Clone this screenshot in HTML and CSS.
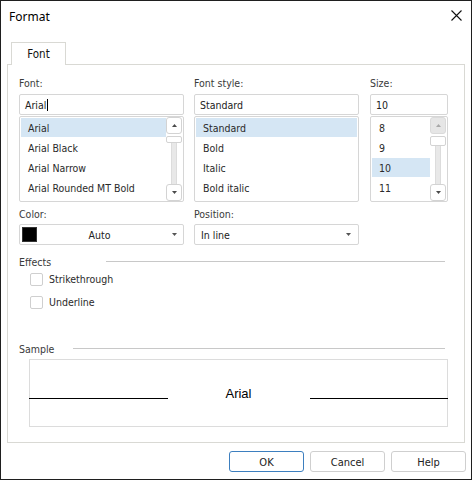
FILE: index.html
```html
<!DOCTYPE html>
<html>
<head>
<meta charset="utf-8">
<link rel="stylesheet" href="styles.css">
</head>
<body>
<div class="window">
  <div class="titlebar">
    <span class="title">Format</span>
    <svg class="close" width="11" height="11" viewBox="0 0 11 11"><path d="M0.5 0.5L10.5 10.5M10.5 0.5L0.5 10.5" stroke="#111" stroke-width="1.1" fill="none"/></svg>
  </div>
  <div class="tabs"><div class="tab">Font</div></div>
  <div class="panel">
    <div class="grid-top">
      <div class="col">
        <div class="label">Font:</div>
        <div class="input">Arial<span class="caret"></span></div>
        <div class="list">
          <div class="items">
            <div class="item sel">Arial</div>
            <div class="item">Arial Black</div>
            <div class="item">Arial Narrow</div>
            <div class="item">Arial Rounded MT Bold</div>
          </div>
          <div class="sbar">
            <div class="sbtn"><svg width="5" height="3" viewBox="0 0 5 3"><polygon points="2.5,0 5,3 0,3" fill="#4a4a4a"/></svg></div>
            <div class="thumb"></div>
            <div class="track"></div>
            <div class="sbtn"><svg width="5" height="3" viewBox="0 0 5 3"><polygon points="0,0 5,0 2.5,3" fill="#4a4a4a"/></svg></div>
          </div>
        </div>
      </div>
      <div class="col">
        <div class="label">Font style:</div>
        <div class="input">Standard</div>
        <div class="list">
          <div class="items">
            <div class="item sel">Standard</div>
            <div class="item">Bold</div>
            <div class="item">Italic</div>
            <div class="item">Bold italic</div>
          </div>
        </div>
      </div>
      <div class="col col-size">
        <div class="label">Size:</div>
        <div class="input">10</div>
        <div class="list">
          <div class="items">
            <div class="item">8</div>
            <div class="item">9</div>
            <div class="item sel">10</div>
            <div class="item">11</div>
          </div>
          <div class="sbar">
            <div class="sbtn sbtn-disabled"><svg width="5" height="3" viewBox="0 0 5 3"><polygon points="2.5,0 5,3 0,3" fill="#a8a8a8"/></svg></div>
            <div class="thumb thumb-tall"></div>
            <div class="track"></div>
            <div class="sbtn"><svg width="5" height="3" viewBox="0 0 5 3"><polygon points="0,0 5,0 2.5,3" fill="#4a4a4a"/></svg></div>
          </div>
        </div>
      </div>
    </div>
    <div class="grid-mid">
      <div class="col">
        <div class="label">Color:</div>
        <div class="select select-color">
          <span class="swatch"></span>
          <span class="select-text">Auto</span>
          <svg class="arrow" width="5" height="3" viewBox="0 0 5 3"><polygon points="0,0 5,0 2.5,3" fill="#555"/></svg>
        </div>
      </div>
      <div class="col">
        <div class="label">Position:</div>
        <div class="select">
          <span class="select-text">In line</span>
          <svg class="arrow" width="5" height="3" viewBox="0 0 5 3"><polygon points="0,0 5,0 2.5,3" fill="#555"/></svg>
        </div>
      </div>
    </div>
    <div class="ghead ghead-effects"><span class="gtitle">Effects</span><div class="gline"></div></div>
    <div class="checks">
      <div class="check"><span class="box"></span><span>Strikethrough</span></div>
      <div class="check"><span class="box"></span><span>Underline</span></div>
    </div>
    <div class="ghead ghead-sample"><span class="gtitle">Sample</span><div class="gline"></div></div>
    <div class="sample">
      <div class="sample-row">
        <div class="sline"></div>
        <span class="sample-text">Arial</span>
        <div class="sline"></div>
      </div>
    </div>
  </div>
  <div class="buttons">
    <div class="btn btn-primary">OK</div>
    <div class="btn">Cancel</div>
    <div class="btn">Help</div>
  </div>
</div>
</body>
</html>
```
FILE: styles.css
```css
* { box-sizing: border-box; }
html, body { margin: 0; padding: 0; background: #fff; }
body {
  font-family: "DejaVu Sans Condensed", "DejaVu Sans", sans-serif;
  font-size: 10.5px;
  color: #333;
}
.window {
  width: 472px;
  height: 480px;
  border: 1px solid #1f1f1f;
  background: #fff;
  display: flex;
  flex-direction: column;
}
.titlebar {
  height: 30px;
  flex: none;
  display: flex;
  align-items: center;
  justify-content: space-between;
  padding: 0 9px 0 8px;
}
.title {
  font-family: "Noto Sans", sans-serif;
  font-size: 12px;
  color: #000;
}
.close { margin-top: -1px; }
.tabs {
  flex: none;
  display: flex;
  padding: 11px 0 0 10px;
}
.tab {
  width: 55px;
  height: 23px;
  border: 1px solid #d9d9d4;
  border-bottom: none;
  background: #fff;
  display: flex;
  align-items: center;
  justify-content: center;
  color: #111;
  font-size: 11.5px;
  padding-bottom: 1px;
  margin-bottom: -1px;
  position: relative;
  z-index: 1;
}
.panel {
  flex: none;
  height: 379px;
  margin: 0 6px;
  border: 1px solid #d9d9d4;
  padding: 9px 16px 0 11px;
}
.grid-top {
  display: grid;
  grid-template-columns: 165px 165px 79px;
  column-gap: 10px;
}
.grid-mid {
  display: grid;
  grid-template-columns: 165px 165px;
  column-gap: 10px;
  margin-top: 3px;
}
.col { display: flex; flex-direction: column; }
.col-size { padding-left: 1px; }
.label {
  height: 16px;
  line-height: 19px;
  margin-bottom: 4px;
  color: #3a3a3a;
  white-space: nowrap;
}
.grid-mid .label { margin-bottom: 3px; }
.input {
  height: 21px;
  border: 1px solid #d6d6d6;
  border-radius: 2px;
  padding: 1px 0 0 5px;
  display: flex;
  align-items: center;
  color: #222;
}
.caret {
  width: 1px;
  height: 12px;
  background: #000;
  margin-left: 1px;
  margin-top: -1px;
}
.list {
  margin-top: 1px;
  height: 86px;
  border: 1px solid #d6d6d6;
  border-radius: 2px;
  display: flex;
}
.items {
  flex: 1;
  padding: 1px;
}
.list .items:not(:last-child) { padding-right: 0; }
.item {
  height: 20px;
  line-height: 21px;
  padding-bottom: 1px;
  text-indent: 7px;
  background-clip: content-box;
  color: #2a2a2a;
  white-space: nowrap;
  overflow: hidden;
}
.item.sel { background-color: #d5e6f4; }
.sbar {
  width: 17px;
  padding-right: 1px;
  display: flex;
  flex-direction: column;
  align-items: stretch;
}
.sbtn {
  height: 17px;
  flex: none;
  border: 1px solid #d3d3d3;
  border-radius: 3px;
  background: #fff;
  display: flex;
  align-items: center;
  justify-content: center;
}
.sbtn-disabled { background: #e6e6e6; border-color: #dadada; }
.thumb {
  height: 7px;
  flex: none;
  margin-top: 2px;
  border: 1px solid #d3d3d3;
  border-radius: 2px;
  background: #fff;
}
.thumb-tall { height: 10px; }
.track {
  flex: 1;
  width: 6px;
  align-self: center;
  background: #e8e8e8;
  border-left: 1px solid #dcdcdc;
  border-right: 1px solid #dcdcdc;
}
.select {
  height: 21px;
  border: 1px solid #d6d6d6;
  border-radius: 2px;
  display: flex;
  align-items: center;
  justify-content: space-between;
  padding: 0 7px 0 6px;
  color: #222;
}
.select-text { padding-top: 1px; }
.select-color {
  display: grid;
  grid-template-columns: 1fr auto 1fr;
  padding: 0 6px 0 2px;
}
.swatch {
  width: 15px;
  height: 15px;
  background: #000;
  border: 1px solid #333;
}
.select-color .arrow { justify-self: end; }
.ghead {
  display: flex;
  align-items: center;
  height: 16px;
  color: #3a3a3a;
}
.gtitle { padding-top: 1px; }
.ghead-effects { margin-top: 8px; }
.ghead-effects .gtitle { width: 87px; }
.ghead-sample { margin-top: 27px; }
.ghead-sample .gtitle { width: 54px; }
.gline {
  flex: 1;
  height: 1px;
  background: #c8c8c8;
  margin-right: 3px;
}
.checks {
  margin-top: -1px;
  padding-left: 11px;
  display: flex;
  flex-direction: column;
  gap: 1px;
}
.check {
  height: 22px;
  display: flex;
  align-items: center;
  gap: 6px;
  color: #2a2a2a;
}
.box {
  width: 13px;
  height: 13px;
  border: 1px solid #cfcfcf;
  border-radius: 2px;
  background: #fff;
}
.sample {
  margin: 3px 0 0 10px;
  height: 68px;
  border: 1px solid #dcdcdc;
}
.sample-row {
  display: flex;
  align-items: flex-end;
  height: 39px;
  margin: 0 -1px;
}
.sline {
  flex: 1;
  height: 1px;
  background: #000;
}
.sample-text {
  width: 142px;
  text-align: center;
  font-family: "Liberation Sans", Arial, sans-serif;
  font-size: 13px;
  line-height: 15px;
  color: #000;
  margin-bottom: -2px;
}
.buttons {
  display: flex;
  justify-content: flex-end;
  gap: 6px;
  margin: 8px 5px 0 0;
}
.btn {
  width: 75px;
  height: 21px;
  border: 1px solid #cfcfcf;
  border-radius: 3px;
  background: #fff;
  display: flex;
  align-items: center;
  justify-content: center;
  padding-top: 1px;
  color: #222;
  font-size: 11px;
}
.btn-primary { border-color: #3d7fbf; }
```
